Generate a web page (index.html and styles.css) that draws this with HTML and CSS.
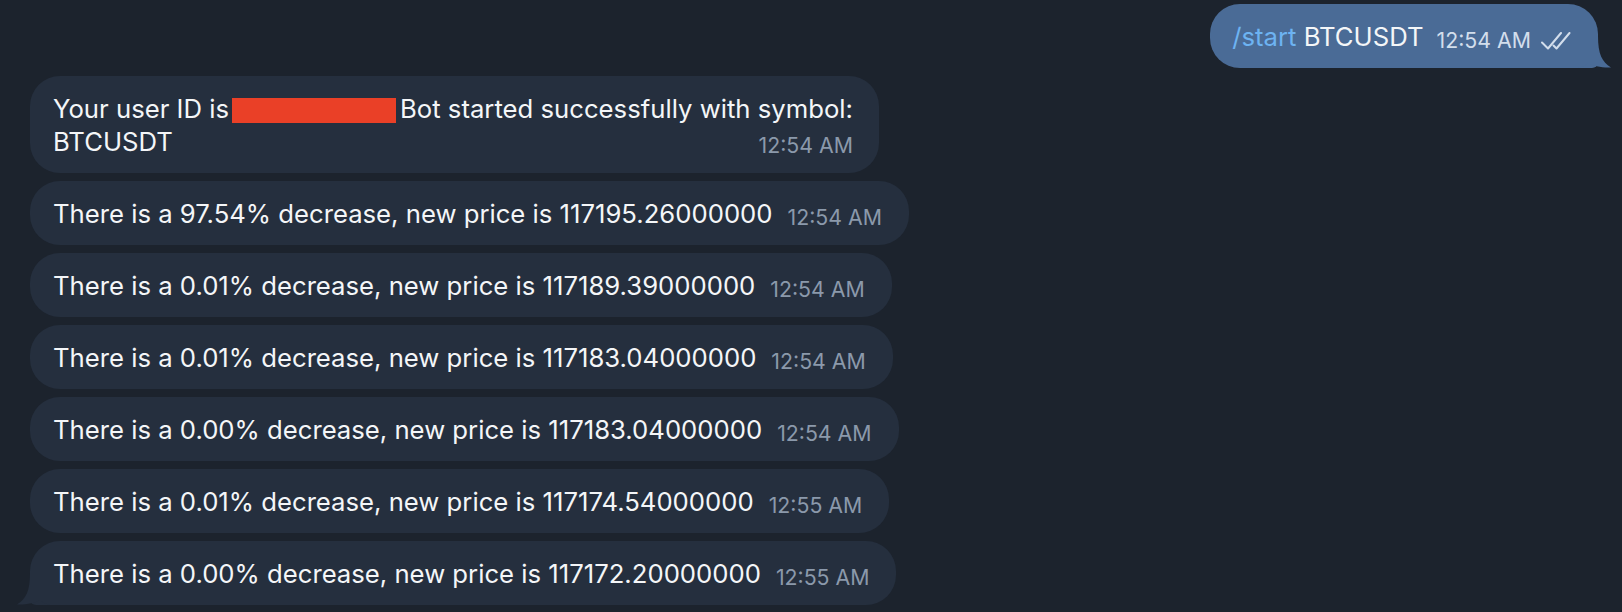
FILE: index.html
```html
<!DOCTYPE html>
<html lang="en">
<head>
  <meta charset="UTF-8">
  <title>BTCUSDT Bot</title>
  <link rel="stylesheet" href="styles.css">
</head>
<body>
  <div class="chat">
    <div class="bubble out tail-right">
      <span class="text"><span class="command">/start</span> BTCUSDT</span>
      <span class="meta">
        <span class="time">12:54 AM</span>
        <svg class="ticks" width="30" height="18" viewBox="0 0 30 18">
          <path d="M1 10.5 L7 16.5 L20 1" />
          <path d="M12.5 13.5 L15.5 16.5 L28.5 1" />
        </svg>
      </span>
    </div>

    <div class="bubble in multi">
      <div class="text">Your user ID is<span class="redacted"></span>Bot started successfully with symbol:</div>
      <div class="last-line">
        <span class="text">BTCUSDT</span>
        <span class="time">12:54 AM</span>
      </div>
    </div>

    <div class="bubble in">
      <span class="text">There is a 97.54% decrease, new price is 117195.26000000</span>
      <span class="time">12:54 AM</span>
    </div>
    <div class="bubble in">
      <span class="text">There is a 0.01% decrease, new price is 117189.39000000</span>
      <span class="time">12:54 AM</span>
    </div>
    <div class="bubble in">
      <span class="text">There is a 0.01% decrease, new price is 117183.04000000</span>
      <span class="time">12:54 AM</span>
    </div>
    <div class="bubble in">
      <span class="text">There is a 0.00% decrease, new price is 117183.04000000</span>
      <span class="time">12:54 AM</span>
    </div>
    <div class="bubble in">
      <span class="text">There is a 0.01% decrease, new price is 117174.54000000</span>
      <span class="time">12:55 AM</span>
    </div>
    <div class="bubble in tail-left">
      <span class="text">There is a 0.00% decrease, new price is 117172.20000000</span>
      <span class="time">12:55 AM</span>
    </div>
  </div>
</body>
</html>
```

FILE: styles.css
```css
* {
  margin: 0;
  padding: 0;
  box-sizing: border-box;
}

body {
  background: #1c232d;
  font-family: Inter, "Noto Sans", sans-serif;
  color: #f4f6f8;
  height: 612px;
  overflow: hidden;
}

.chat {
  display: flex;
  flex-direction: column;
  align-items: flex-start;
  gap: 8px;
  padding: 4px 24px 0 30px;
}

.bubble {
  position: relative;
  display: flex;
  align-items: flex-end;
  gap: 15px;
  padding: 15.5px 27px 15.5px 23px;
  border-radius: 30px;
  font-size: 25.7px;
  line-height: 33px;
  white-space: nowrap;
}

.bubble.in {
  background: #252f3e;
}

.bubble.out {
  align-self: flex-end;
  background: #4a6b96;
  padding-left: 22px;
  gap: 13px;
}

.bubble.multi {
  flex-direction: column;
  align-items: stretch;
  gap: 0;
  padding-right: 26px;
}

.last-line {
  display: flex;
  justify-content: space-between;
  align-items: flex-end;
}

.command {
  color: #6db3f2;
}

.redacted {
  display: inline-block;
  width: 164px;
  height: 25px;
  margin: 0 4px 0 3px;
  vertical-align: middle;
  background: #ea4027;
}

.time {
  font-size: 21.3px;
  line-height: 25px;
  color: #8b99ab;
}

.out .time {
  color: #d3deec;
}

.meta {
  display: flex;
  align-items: flex-end;
  gap: 10px;
}

.ticks {
  margin-bottom: 3px;
}

.ticks path {
  fill: none;
  stroke: #d3deec;
  stroke-width: 2;
  stroke-linecap: round;
  stroke-linejoin: round;
}

/* bubble tails */
.tail-right {
  border-bottom-right-radius: 6px;
}

.tail-left {
  border-bottom-left-radius: 6px;
}

.tail-right::after,
.tail-left::after {
  content: "";
  position: absolute;
  bottom: 0;
  width: 33px;
  height: 32px;
}

.tail-right::after {
  right: -13px;
  background: url("data:image/svg+xml;utf8,<svg xmlns='http://www.w3.org/2000/svg' width='33' height='32' viewBox='0 0 33 32'><path fill='%234a6b96' d='M20 0 C20 18 24 26 33 31.5 C25 32 14 30 10 27 C8 29 5 31 0 32 L0 0 Z'/></svg>");
}

.tail-left::after {
  left: -13px;
  background: url("data:image/svg+xml;utf8,<svg xmlns='http://www.w3.org/2000/svg' width='33' height='32' viewBox='0 0 33 32'><path fill='%23252f3e' d='M13 0 C13 18 9 26 0 31.5 C8 32 19 30 23 27 C25 29 28 31 33 32 L33 0 Z'/></svg>");
}
```
